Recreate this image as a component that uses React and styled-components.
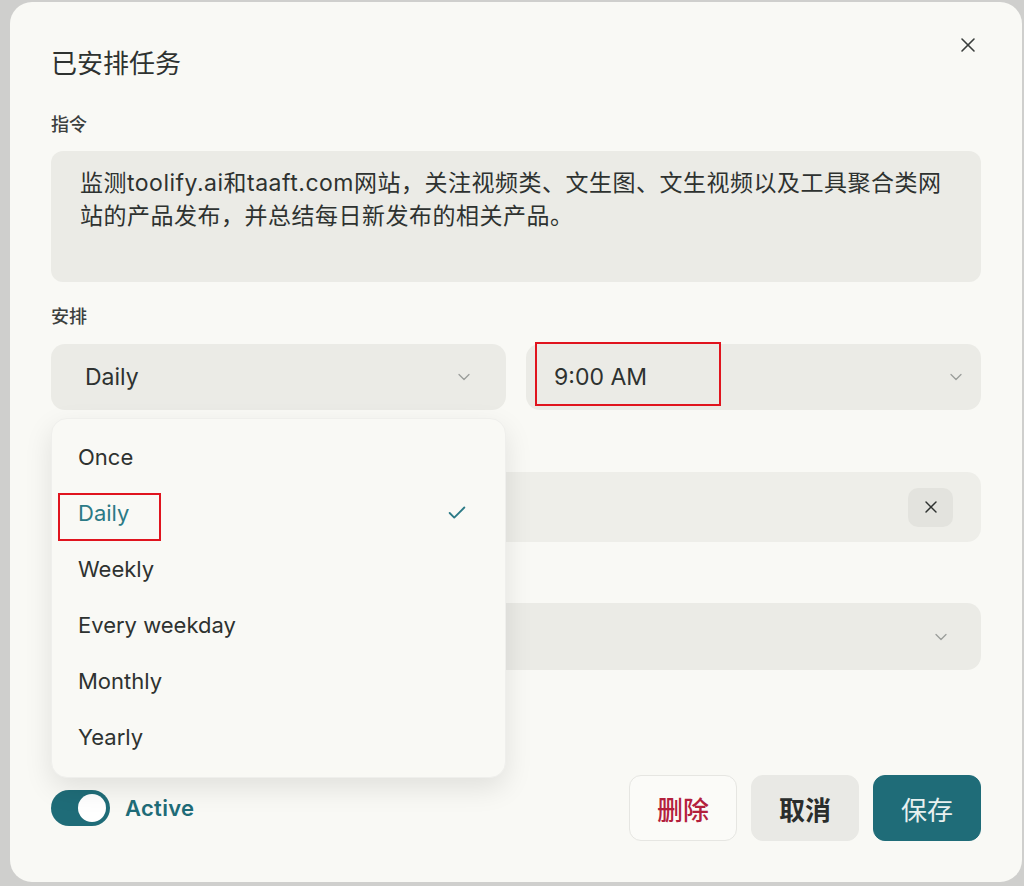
import styled, { createGlobalStyle } from "styled-components";
import { X, ChevronDown, Check } from "lucide-react";

const GlobalStyle = createGlobalStyle`
  * { box-sizing: border-box; }
  body {
    margin: 0;
    background: #cfcfcd;
    font-family: Inter, "Noto Sans CJK SC", sans-serif;
    color: #2e3230;
  }
`;

const teal = "#1f6c78";

const Page = styled.div`
  padding: 2px 2px 4px 10px;
`;

const Modal = styled.div`
  position: relative;
  width: 1012px;
  height: 880px;
  background: #f9f9f5;
  border-radius: 22px;
  padding: 44px 41px 41px 41px;
  display: flex;
  flex-direction: column;
`;

const CloseButton = styled.button`
  position: absolute;
  top: 30px;
  right: 41px;
  width: 26px;
  height: 26px;
  padding: 0;
  border: none;
  background: none;
  color: #3a3e3c;
  display: flex;
  align-items: center;
  justify-content: center;
`;

const Title = styled.h2`
  margin: 0;
  font-size: 26px;
  line-height: 32px;
  font-weight: 400;
  font-family: "Noto Sans CJK SC", sans-serif;
  color: #2e3230;
`;

const Label = styled.div`
  margin-top: ${(p) => p.$mt}px;
  min-height: 24px;
  font-size: 18px;
  line-height: 24px;
  font-weight: 500;
  font-family: "Noto Sans CJK SC", sans-serif;
  color: #3c403e;
`;

const Instruction = styled.div`
  margin-top: 16px;
  height: 131px;
  background: #ebebe6;
  border-radius: 12px;
  padding: 16px 30px 0 29px;
  font-size: 23px;
  line-height: 33px;
  letter-spacing: 0.5px;
  color: #2e3230;
`;

const ScheduleRow = styled.div`
  margin-top: 17px;
  display: grid;
  grid-template-columns: 455px 455px;
  column-gap: 20px;
`;

const SelectWrap = styled.div`
  position: relative;
`;

const SelectBox = styled.div`
  position: relative;
  height: 66px;
  background: #ebebe6;
  border-radius: 14px;
  display: flex;
  align-items: center;
  justify-content: space-between;
  padding: 0 ${(p) => p.$pr}px 0 ${(p) => p.$pl}px;
  font-size: 23px;
  color: #2e3230;
`;

const Chevron = styled(ChevronDown)`
  color: #9a9d9a;
`;

const Highlight = styled.span`
  position: absolute;
  left: ${(p) => p.$x}px;
  top: ${(p) => p.$y}px;
  width: ${(p) => p.$w}px;
  height: ${(p) => p.$h}px;
  border: 2px solid #e0141e;
  pointer-events: none;
`;

const Menu = styled.div`
  position: absolute;
  top: calc(100% + 8px);
  left: 0;
  width: 100%;
  z-index: 5;
  background: #f9f9f5;
  border: 1px solid #efefec;
  border-radius: 16px;
  box-shadow: 0 10px 28px rgba(0, 0, 0, 0.1);
  padding: 10px 0 12px;
`;

const MenuItem = styled.div`
  position: relative;
  height: 56px;
  display: flex;
  align-items: center;
  justify-content: space-between;
  padding: 0 37px 0 26px;
  font-size: 22px;
  color: ${(p) => (p.$selected ? "#2b7a86" : "#2e3230")};
`;

const Field = styled.div`
  margin-top: ${(p) => p.$mt}px;
  height: ${(p) => p.$h}px;
  background: ${(p) => p.$bg};
  border-radius: 14px;
  display: flex;
  align-items: center;
  justify-content: flex-end;
  padding: 0 ${(p) => p.$pr}px 0 29px;
`;

const ClearButton = styled.button`
  width: 45px;
  height: 39px;
  border: none;
  border-radius: 10px;
  background: #e3e3de;
  color: #2e3230;
  display: flex;
  align-items: center;
  justify-content: center;
  padding: 0;
`;

const Footer = styled.div`
  margin-top: 105px;
  height: 66px;
  display: flex;
  align-items: center;
  justify-content: space-between;
`;

const ToggleGroup = styled.div`
  display: flex;
  align-items: center;
  gap: 15px;
`;

const Toggle = styled.div`
  width: 59px;
  height: 36px;
  border-radius: 18px;
  background: ${teal};
  padding: 4px;
  display: flex;
  justify-content: flex-end;
`;

const Knob = styled.div`
  width: 28px;
  height: 28px;
  border-radius: 50%;
  background: #ffffff;
`;

const ActiveText = styled.span`
  font-size: 22px;
  font-weight: 600;
  letter-spacing: 0.3px;
  color: ${teal};
`;

const Buttons = styled.div`
  display: flex;
  gap: 14px;
`;

const Button = styled.button`
  width: 108px;
  height: 66px;
  border-radius: 12px;
  font-family: "Noto Sans CJK SC", sans-serif;
  font-size: 26px;
  font-weight: ${(p) => p.$weight};
  color: ${(p) => p.$color};
  background: ${(p) => p.$bg};
  border: 1px solid ${(p) => p.$border};
  display: flex;
  align-items: center;
  justify-content: center;
  padding: 0;
`;

const options = ["Once", "Daily", "Weekly", "Every weekday", "Monthly", "Yearly"];

export default function App() {
  return (
    <Page>
      <GlobalStyle />
      <Modal>
        <CloseButton aria-label="关闭">
          <X size={24} strokeWidth={1.6} />
        </CloseButton>
        <Title>已安排任务</Title>

        <Label $mt={33}>指令</Label>
        <Instruction>
          监测toolify.ai和taaft.com网站，关注视频类、文生图、文生视频以及工具聚合类网站的产品发布，并总结每日新发布的相关产品。
        </Instruction>

        <Label $mt={21}>安排</Label>
        <ScheduleRow>
          <SelectWrap>
            <SelectBox $pl={34} $pr={32}>
              Daily
              <Chevron size={20} strokeWidth={1.5} />
            </SelectBox>
            <Menu>
              {options.map((o) => (
                <MenuItem key={o} $selected={o === "Daily"}>
                  {o}
                  {o === "Daily" && (
                    <>
                      <Check size={22} strokeWidth={2} color="#2b7a86" />
                      <Highlight $x={6} $y={8} $w={103} $h={48} />
                    </>
                  )}
                </MenuItem>
              ))}
            </Menu>
          </SelectWrap>
          <SelectBox $pl={28} $pr={15}>
            9:00 AM
            <Chevron size={20} strokeWidth={1.5} />
            <Highlight $x={9} $y={-2} $w={186} $h={64} />
          </SelectBox>
        </ScheduleRow>

        {/* labels below are covered by the open menu */}
        <Label $mt={19} aria-label="结束日期" />
        <Field $mt={19} $h={70} $bg="#eeeee9" $pr={28}>
          <ClearButton aria-label="清除">
            <X size={20} strokeWidth={1.7} />
          </ClearButton>
        </Field>

        <Label $mt={21} aria-label="通知" />
        <Field $mt={16} $h={67} $bg="#ebebe6" $pr={30}>
          <Chevron size={20} strokeWidth={1.5} />
        </Field>

        <Footer>
          <ToggleGroup>
            <Toggle>
              <Knob />
            </Toggle>
            <ActiveText>Active</ActiveText>
          </ToggleGroup>
          <Buttons>
            <Button $bg="#fbfbf8" $border="#e6e6e2" $color="#b3203c" $weight={500}>
              删除
            </Button>
            <Button $bg="#e9e9e5" $border="#e9e9e5" $color="#2a2d2c" $weight={700}>
              取消
            </Button>
            <Button $bg={teal} $border={teal} $color="#e8f0ef" $weight={400}>
              保存
            </Button>
          </Buttons>
        </Footer>
      </Modal>
    </Page>
  );
}
